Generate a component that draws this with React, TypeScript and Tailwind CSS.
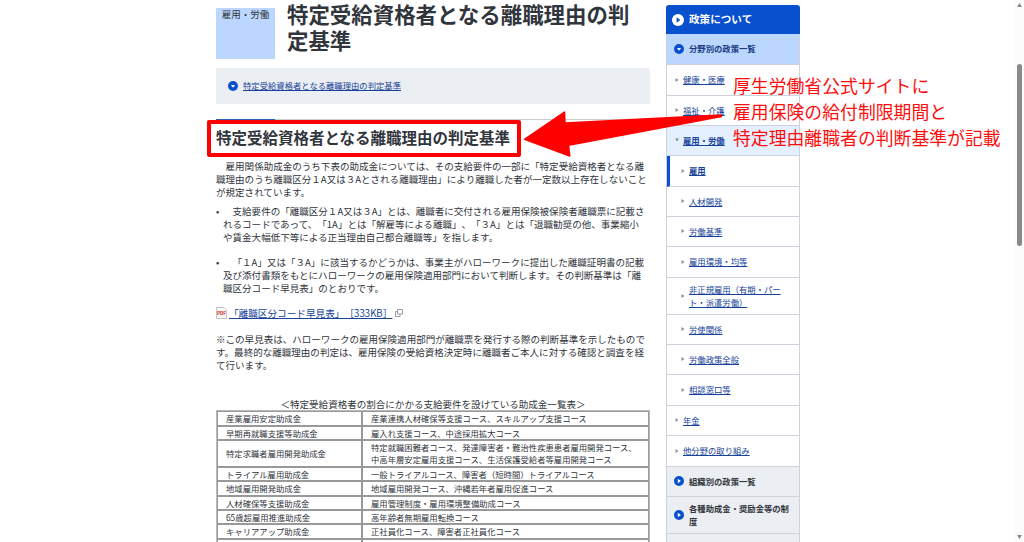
import React from "react";
import clsx from "clsx";

interface SideItem {
  lines: string[];
  kind: "section" | "child" | "grandchild" | "group";
  height: string;
  open?: boolean;
  current?: boolean;
}

const sideItems: SideItem[] = [
  { lines: ["分野別の政策一覧"], kind: "section", height: "h-[31px]", open: true },
  { lines: ["健康・医療"], kind: "child", height: "h-[31px]" },
  { lines: ["福祉・介護"], kind: "child", height: "h-[30px]" },
  { lines: ["雇用・労働"], kind: "child", height: "h-[30px]", open: true },
  { lines: ["雇用"], kind: "grandchild", height: "h-[31px]", current: true },
  { lines: ["人材開発"], kind: "grandchild", height: "h-[30px]" },
  { lines: ["労働基準"], kind: "grandchild", height: "h-[30px]" },
  { lines: ["雇用環境・均等"], kind: "grandchild", height: "h-[31px]" },
  { lines: ["非正規雇用（有期・パー", "ト・派遣労働）"], kind: "grandchild", height: "h-[37px]" },
  { lines: ["労使関係"], kind: "grandchild", height: "h-[30px]" },
  { lines: ["労働政策全般"], kind: "grandchild", height: "h-[30px]" },
  { lines: ["相談窓口等"], kind: "grandchild", height: "h-[31px]" },
  { lines: ["年金"], kind: "child", height: "h-[30px]" },
  { lines: ["他分野の取り組み"], kind: "child", height: "h-[31px]" },
  { lines: ["組織別の政策一覧"], kind: "group", height: "h-[30px]" },
  { lines: ["各種助成金・奨励金等の制", "度"], kind: "group", height: "h-[37px]" },
  { lines: [], kind: "group", height: "h-[30px]" },
];

const subsidies = [
  { name: "産業雇用安定助成金", courses: ["産業連携人材確保等支援コース、スキルアップ支援コース"], height: "h-[13px]" },
  { name: "早期再就職支援等助成金", courses: ["雇入れ支援コース、中途採用拡大コース"], height: "h-[12px]" },
  {
    name: "特定求職者雇用開発助成金",
    courses: ["特定就職困難者コース、発達障害者・難治性疾患患者雇用開発コース、", "中高年層安定雇用支援コース、生活保護受給者等雇用開発コース"],
    height: "h-[25px]",
  },
  { name: "トライアル雇用助成金", courses: ["一般トライアルコース、障害者（短時間）トライアルコース"], height: "h-[12px]" },
  { name: "地域雇用開発助成金", courses: ["地域雇用開発コース、沖縄若年者雇用促進コース"], height: "h-[13px]" },
  { name: "人材確保等支援助成金", courses: ["雇用管理制度・雇用環境整備助成コース"], height: "h-[12px]" },
  { name: "65歳超雇用推進助成金", courses: ["高年齢者無期雇用転換コース"], height: "h-[12px]" },
  { name: "キャリアアップ助成金", courses: ["正社員化コース、障害者正社員化コース"], height: "h-[13px]" },
  { name: "", courses: [], height: "h-[12px]" },
];

type Direction = "right" | "down";

const CircleArrow = ({ direction, inverse, className }: { direction: Direction; inverse?: boolean; className?: string }) => (
  <svg viewBox="0 0 10 10" className={clsx("shrink-0", className)}>
    <circle cx="5" cy="5" r="5" fill={inverse ? "#fff" : "#0950cf"} />
    <path d={direction === "right" ? "M3.8 2.8 6.9 5 3.8 7.2Z" : "M2.9 4 5 6.8 7.1 4Z"} fill={inverse ? "#0950cf" : "#fff"} />
  </svg>
);

const SmallArrow = ({ direction }: { direction: Direction }) => (
  <svg viewBox="0 0 4 4" className="mr-1 size-1 shrink-0">
    <path d={direction === "right" ? "M.5 0 3.5 2 .5 4Z" : "M0 .5H4L2 3.5Z"} fill="#8b8f98" />
  </svg>
);

const Lines = ({ lines }: { lines: string[] }) => (
  <>
    {lines.map((line) => (
      <span key={line} className="block">{line}</span>
    ))}
  </>
);

const SideRow = ({ item }: { item: SideItem }) => {
  const isLink = item.kind === "child" || item.kind === "grandchild";
  return (
    <li
      className={clsx(
        "flex items-center border-b border-[#cdd2dd] pb-px",
        item.height,
        item.kind === "section" && "bg-[#bcd7ff] pl-[7px] font-bold text-[#173a80]",
        item.kind === "group" && "bg-[#ebeef3] pl-[7px] font-bold text-[#31353c]",
        item.kind === "child" && "pl-2",
        item.kind === "child" && item.open && "bg-[#e4efff] font-bold",
        item.kind === "grandchild" && !item.current && "pl-[14px]",
        item.current && "border-l-[3px] border-l-[#0950cf] pl-[11px] font-bold",
      )}
    >
      {isLink ? (
        <SmallArrow direction={item.open ? "down" : "right"} />
      ) : (
        <CircleArrow direction={item.open ? "down" : "right"} className="mr-[5px] size-[10px]" />
      )}
      <span className={clsx("leading-[12.6px]", isLink && "text-[#164299] underline underline-offset-1")}>
        <Lines lines={item.lines} />
      </span>
    </li>
  );
};

const Sidebar = () => (
  <nav className="mt-[5px] ml-4 w-[134px] shrink-0 whitespace-nowrap text-[8.34px]">
    <div className="flex h-[29px] items-center rounded-t-[3px] bg-[#0950cf] pl-[6px] text-[10.6px] font-bold text-white">
      <CircleArrow direction="right" inverse className="mr-[5px] size-3" />
      <span className="pb-px">政策について</span>
    </div>
    <ul className="border-x border-[#cdd2dd]">
      {sideItems.map((item, i) => (
        <SideRow key={i} item={item} />
      ))}
    </ul>
  </nav>
);

const SubsidyTable = () => (
  <div className="flex flex-col gap-[2px] border border-[#bababa] bg-[#999] p-px text-[8.34px] leading-3">
    {subsidies.map((row, i) => (
      <div key={i} className={clsx("flex gap-[2px]", row.height)}>
        <div className="flex w-[143px] items-center bg-white pb-px pl-2">{row.name}</div>
        <div className="flex flex-1 flex-col justify-center bg-white pb-px pl-2">
          <Lines lines={row.courses} />
        </div>
      </div>
    ))}
  </div>
);

const Article = () => (
  <main className="ml-[216px] w-[434px] shrink-0 whitespace-nowrap text-[9.54px] leading-[13px]">
    <header className="flex h-[68px]">
      <div className="mt-2 h-[51px] w-[59px] rounded-[1px] bg-[#bcd7ff] text-center leading-[12px]">雇用・労働</div>
      <h1 className="ml-3 pt-px text-[21.45px] leading-[25.5px] font-bold">
        <Lines lines={["特定受給資格者となる離職理由の判", "定基準"]} />
      </h1>
    </header>
    <div className="flex h-9 items-center rounded-[2px] bg-[#ebeef3] pb-px pl-3 text-[8.34px]">
      <CircleArrow direction="down" className="mr-[5px] size-[10px]" />
      <a className="text-[#164299] underline underline-offset-1">特定受給資格者となる離職理由の判定基準</a>
    </div>
    <div className="mt-[15px] flex h-px bg-[#cdced0]">
      <div className="w-[59px] bg-[#2d5fc0]" />
    </div>
    <h2 className="mt-[6px] h-[34px] text-[15.5px] leading-[22px] font-bold">特定受給資格者となる離職理由の判定基準</h2>
    <p className="h-[45px]">
      <Lines
        lines={[
          "　雇用関係助成金のうち下表の助成金については、その支給要件の一部に「特定受給資格者となる離",
          "職理由のうち離職区分１A又は３Aとされる離職理由」により離職した者が一定数以上存在しないこと",
          "が規定されています。",
        ]}
      />
    </p>
    <ul>
      <li className="flex h-[51px]">
        <span className="w-[7px]">•</span>
        <div>
          <Lines
            lines={[
              "　支給要件の「離職区分１A又は３A」とは、離職者に交付される雇用保険被保険者離職票に記載さ",
              "れるコードであって、「1A」とは「解雇等による離職」、「３A」とは「退職勧奨の他、事業縮小",
              "や賃金大幅低下等による正当理由自己都合離職等」を指します。",
            ]}
          />
        </div>
      </li>
      <li className="flex h-[51px]">
        <span className="w-[7px]">•</span>
        <div>
          <Lines
            lines={[
              "　「１A」又は「３A」に該当するかどうかは、事業主がハローワークに提出した離職証明書の記載",
              "及び添付書類をもとにハローワークの雇用保険適用部門において判断します。その判断基準は「離",
              "職区分コード早見表」のとおりです。",
            ]}
          />
        </div>
      </li>
    </ul>
    <div className="flex h-[26px] items-start">
      <svg viewBox="0 0 11 12" className="h-3 w-[11px]">
        <path d="M.5 .5H8L10.5 3V11.5H.5Z" fill="#f7f7f7" stroke="#c3c3c3" />
        <text x="1" y="8.3" fontSize="4.8" fontWeight="700" fill="#d0262c" textLength="9" lengthAdjust="spacingAndGlyphs">PDF</text>
      </svg>
      <a className="ml-[2px] text-[9.65px] text-[#164299] underline underline-offset-1">「離職区分コード早見表」［333KB］</a>
      <svg viewBox="0 0 8 8" className="mt-[2px] ml-[3px] size-2" fill="none" stroke="#9a9da3">
        <path d="M2.5 .5h5v4.5h-5zM2.5 2.5h-2v5h4.5v-2.5" />
      </svg>
    </div>
    <p className="h-[65px]">
      <Lines
        lines={[
          "※この早見表は、ハローワークの雇用保険適用部門が離職票を発行する際の判断基準を示したもので",
          "す。最終的な離職理由の判定は、雇用保険の受給資格決定時に離職者ご本人に対する確認と調査を経",
          "て行います。",
        ]}
      />
    </p>
    <p className="h-[12px] text-center">＜特定受給資格者の割合にかかる支給要件を設けている助成金一覧表＞</p>
    <SubsidyTable />
  </main>
);

const Annotation = () => (
  <>
    <svg viewBox="0 0 1024 542" className="absolute inset-0 h-[542px] w-[1024px]">
      <rect x="209" y="122" width="310" height="33" fill="none" stroke="#f00" strokeWidth="4" strokeLinejoin="round" />
      <path d="M524.5 139.3 564.5 112 565 123 721 115 721.5 116.5 568.5 145.2 569.8 156Z" fill="#f00" stroke="#f00" strokeWidth="1.5" strokeLinejoin="round" />
    </svg>
    <p className="absolute top-[71.5px] left-[733px] text-[17.85px] leading-[26.2px] whitespace-nowrap text-[#ff0d0d]">
      <Lines lines={["厚生労働省公式サイトに", "雇用保険の給付制限期間と", "特定理由離職者の判断基準が記載"]} />
    </p>
  </>
);

const Scrollbar = () => (
  <div className="ml-auto flex w-[9px] flex-col items-center bg-[#fcfcfc] py-[3px]">
    <svg viewBox="0 0 5 4" className="h-1 w-[5px]">
      <path d="M2.5 0 5 4H0Z" fill="#8a8a8a" />
    </svg>
    <div className="mt-[57px] h-[182px] w-[5px] rounded-full bg-[#8a8a8a]" />
    <svg viewBox="0 0 5 4" className="mt-auto h-1 w-[5px]">
      <path d="M2.5 4 5 0H0Z" fill="#8a8a8a" />
    </svg>
  </div>
);

export default function App() {
  return (
    <div
      lang="ja"
      className="relative flex h-[542px] w-[1024px] overflow-hidden bg-white font-['Noto_Sans_CJK_JP',sans-serif] text-[#31353c] [text-spacing-trim:space-all]"
    >
      <Article />
      <Sidebar />
      <Scrollbar />
      <Annotation />
    </div>
  );
}
